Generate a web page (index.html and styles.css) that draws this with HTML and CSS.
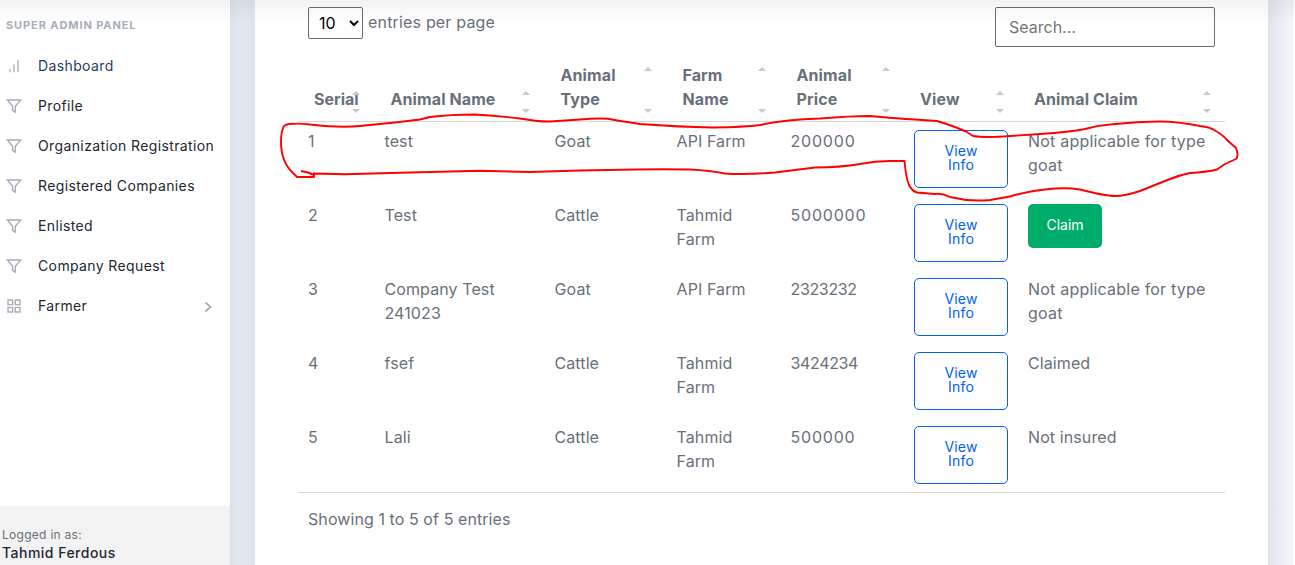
FILE: index.html
```html
<!DOCTYPE html>
<html lang="en">
<head>
<meta charset="utf-8">
<title>Super Admin Panel</title>
<link rel="stylesheet" href="styles.css">
</head>
<body>
<svg class="defs" width="0" height="0">
  <symbol id="filter" viewBox="0 0 24 24"><path d="M22 3H2l8 9.46V19l4 2v-8.54L22 3z"/></symbol>
  <symbol id="bars" viewBox="0 0 24 24"><path d="M18 20V2M12 20v-12M6 20v-5"/></symbol>
  <symbol id="grid" viewBox="0 0 24 24"><path d="M3 3h7v7H3zM14 3h7v7h-7zM14 14h7v7h-7zM3 14h7v7H3z"/></symbol>
  <symbol id="sort" viewBox="0 0 8 22"><path d="M0 4L4 0L8 4zM0 18L4 22L8 18z"/></symbol>
  <symbol id="sort-tall" viewBox="0 0 8 46"><path d="M0 4L4 0L8 4zM0 42L4 46L8 42z"/></symbol>
</svg>
<div class="layout">
  <aside class="sidebar">
    <div class="heading">SUPER ADMIN PANEL</div>
    <nav class="menu">
      <a class="item current"><svg class="icon bars"><use href="#bars"/></svg><span>Dashboard</span></a>
      <a class="item"><svg class="icon"><use href="#filter"/></svg><span>Profile</span></a>
      <a class="item"><svg class="icon"><use href="#filter"/></svg><span>Organization Registration</span></a>
      <a class="item"><svg class="icon"><use href="#filter"/></svg><span>Registered Companies</span></a>
      <a class="item"><svg class="icon"><use href="#filter"/></svg><span>Enlisted</span></a>
      <a class="item"><svg class="icon"><use href="#filter"/></svg><span>Company Request</span></a>
      <a class="item"><svg class="icon"><use href="#grid"/></svg><span>Farmer</span><svg class="chevron" viewBox="0 0 8 12"><path d="M1.5 1.5L6.5 6L1.5 10.5"/></svg></a>
    </nav>
    <footer class="user"><div class="logged">Logged in as:</div><div class="name">Tahmid Ferdous</div></footer>
  </aside>
  <main class="content">
    <section class="card">
      <div class="toolbar">
        <label class="pager"><select class="select"><option>10</option></select><span>entries per page</span></label>
        <input class="search" placeholder="Search...">
      </div>
      <table class="table">
        <colgroup><col class="c1"><col class="c2"><col class="c3"><col class="c4"><col class="c5"><col class="c6"><col class="c7"></colgroup>
        <thead><tr>
          <th><div class="sorter"><span class="h-serial">Serial</span><svg class="sort"><use href="#sort"/></svg></div></th>
          <th><div class="sorter"><span>Animal Name</span><svg class="sort"><use href="#sort"/></svg></div></th>
          <th><div class="sorter"><span>Animal<br>Type</span><svg class="sort tall"><use href="#sort-tall"/></svg></div></th>
          <th><div class="sorter"><span>Farm<br>Name</span><svg class="sort tall"><use href="#sort-tall"/></svg></div></th>
          <th><div class="sorter"><span>Animal<br>Price</span><svg class="sort tall"><use href="#sort-tall"/></svg></div></th>
          <th><div class="sorter"><span>View</span><svg class="sort"><use href="#sort"/></svg></div></th>
          <th><div class="sorter"><span>Animal Claim</span><svg class="sort"><use href="#sort"/></svg></div></th>
        </tr></thead>
        <tbody>
          <tr><td>1</td><td>test</td><td>Goat</td><td>API Farm</td><td class="num wide">200000</td><td><button class="view">View<br>Info</button></td><td class="status">Not applicable for type<br>goat</td></tr>
          <tr><td>2</td><td>Test</td><td>Cattle</td><td>Tahmid<br>Farm</td><td class="num wide">5000000</td><td><button class="view">View<br>Info</button></td><td><button class="claim">Claim</button></td></tr>
          <tr><td>3</td><td>Company Test<br>241023</td><td>Goat</td><td>API Farm</td><td class="num">2323232</td><td><button class="view">View<br>Info</button></td><td class="status">Not applicable for type<br>goat</td></tr>
          <tr><td>4</td><td>fsef</td><td>Cattle</td><td>Tahmid<br>Farm</td><td class="num">3424234</td><td><button class="view">View<br>Info</button></td><td>Claimed</td></tr>
          <tr><td>5</td><td>Lali</td><td>Cattle</td><td>Tahmid<br>Farm</td><td class="num wide">500000</td><td><button class="view">View<br>Info</button></td><td>Not insured</td></tr>
        </tbody>
      </table>
      <div class="info">Showing 1 to 5 of 5 entries</div>
    </section>
  </main>
</div>
<div class="topshade"></div>
<svg class="markup" viewBox="0 0 1295 565"><path d="M301 171L308 172.500L314 175V177H297L293 173Q281 162 281 142Q281 131 284 126Q287 124 289 124Q300 123 310 124.500Q340 128 360 126L395 122.500L420 119.500L430 117Q450 114.500 475 114.500Q500 116 520 118.500Q540 122 550 121.500L580 119.500Q597 118 608 118.800Q620 121 640 124Q680 127 713 127.500Q745 127 760 125Q785 119.500 820 118.500Q850 116 870 116Q890 118 937 121Q947 124 955 127L966 131.500L973 136Q985 138 1010 136L1040 134Q1070 132 1085 129Q1097 125.500 1110 124.500Q1140 121.500 1160 121.500Q1177 121.500 1200 126Q1210 127 1215 130.500Q1223 135 1227 140L1236 148Q1239 156 1236 159L1225 164L1217 169.500Q1207 172 1190 173Q1180 175 1170 179L1140 191Q1125 196 1115 196Q1105 196 1080 189.500Q1065 187 1045 189.500Q1025 192 1010 196.500L990 200Q970 202 950 197Q942 193 935 194L917 192.500Q912 191 909 185Q906 178 904.500 161H890Q875 161 860 164Q840 167.500 815 167.500Q795 170 775 172.500Q745 175 725 173.500Q710 170.500 690 169.500Q665 169 635 169.500L580 170.500L530 172L480 170.800L400 172.700L345 174.200L313 173.500"/></svg>
</body>
</html>
```
FILE: styles.css
```css
* { box-sizing: border-box; }
body { margin: 0; height: 565px; overflow: hidden; background: #fff; color: #69707a; font: 400 16px/24px Metropolis, Inter, sans-serif; letter-spacing: .1px; }
.defs { position: absolute; }
.layout { display: flex; width: 1293px; height: 565px; background: #eff3fb; }
.sidebar { display: flex; flex-direction: column; width: 230px; background: #fff; }
.heading { padding: 17px 0 0 6px; font-size: 11px; line-height: 16px; font-weight: 700; letter-spacing: .9px; color: #a7aeb8; }
.menu { display: flex; flex-direction: column; padding-top: 13px; }
.item { display: flex; align-items: center; height: 40px; padding: 0 16px 0 6px; color: #212832; font-size: 14px; line-height: 20px; letter-spacing: .38px; white-space: nowrap; }
.item.current { color: #1f3a68; }
.icon { flex: none; width: 16px; height: 16px; margin-right: 16px; fill: none; stroke: #a7aeb8; stroke-width: 2.1; }
.bars { margin-top: 2px; stroke: #bcc2ca; stroke-width: 2.6; }
.chevron { width: 8px; height: 12px; margin: 2px 2px 0 auto; fill: none; stroke: #a7aeb8; stroke-width: 1.8; }
.user { margin-top: auto; height: 59px; padding: 19px 0 0 2px; background: #f3f3f3; }
.logged { font-size: 12px; line-height: 19px; letter-spacing: .28px; }
.name { font-size: 14px; line-height: 18px; font-weight: 500; letter-spacing: .48px; color: #212832; }
.content { display: flex; flex: 1; padding: 0 25px; background: linear-gradient(90deg, #dde2ea, #e3e7ee 12px, #dfe4ec 25px, #dfe2e9 1038px, #eff3fb 1058px); }
.card { flex: 1; padding: 7px 43px 0; background: #fff; }
.toolbar { display: flex; justify-content: space-between; align-items: flex-start; height: 48px; padding: 0 10px; }
.pager { display: flex; gap: 5px; line-height: 31px; letter-spacing: .18px; }
.select { width: 55px; height: 32px; padding: 0 0 0 6px; border: 1px solid #6b6b6b; border-radius: 2px; background: #fff; color: #000; font: inherit; }
.search { width: 220px; height: 40px; padding: 0 13px; border: 1px solid #6b6b6b; border-radius: 2px; font: inherit; color: #69707a; background: #fff; }
.search::placeholder { color: #757575; opacity: 1; }
.table { width: 927px; table-layout: fixed; border-collapse: separate; border-spacing: 0; border-bottom: 1px solid #d8d8d8; }
.c1 { width: 76.5px; } .c2 { width: 170px; } .c3 { width: 122px; } .c4 { width: 114px; } .c5 { width: 123.5px; } .c6 { width: 114px; } .c7 { width: 207px; }
th { height: 67px; padding: 8px 10px 10px; border-bottom: 1px solid #d8d8d8; text-align: left; vertical-align: bottom; font-weight: 700; letter-spacing: .1px; }
.sorter { display: flex; justify-content: space-between; align-items: flex-end; padding: 0 4.5px 0 6px; }
.h-serial { width: 34px; letter-spacing: 0; white-space: nowrap; }
.sort { flex: none; width: 8px; height: 22px; margin-bottom: -2px; fill: #c8c8c8; }
.sort.tall { height: 46px; }
td { height: 74px; padding: 7px 10px 8px; vertical-align: top; white-space: nowrap; }
.status { letter-spacing: .21px; }
.num { letter-spacing: -.35px; }
.num.wide { letter-spacing: .8px; }
button { display: block; margin-top: 1px; border-radius: 5px; font: 400 14px/14px Metropolis, Inter, sans-serif; }
.view { width: 94px; height: 58px; padding: 0 0 2px; border: 1px solid #0061f2; background: #fff; color: #0061f2; letter-spacing: .2px; }
.claim { width: 74px; height: 44px; padding: 0 0 2px; border: 0; background: #00ac69; color: #fff; }
.info { padding: 14px 10px; letter-spacing: .08px; }
.topshade { position: absolute; inset: 0 0 auto; height: 22px; background: linear-gradient(rgba(33,40,50,.06), rgba(33,40,50,0)); pointer-events: none; }
.markup { position: absolute; inset: 0; width: 1295px; height: 565px; fill: none; stroke: #f00; stroke-width: 1.9; stroke-linejoin: round; pointer-events: none; }
```
